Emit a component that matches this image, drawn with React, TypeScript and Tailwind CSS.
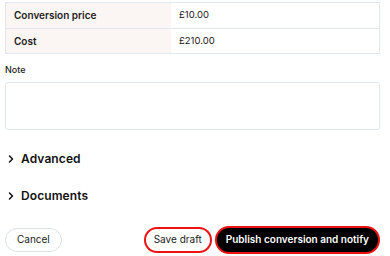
import { ChevronRight } from "lucide-react";

const rows = [
  { label: "Conversion price", value: "£10.00" },
  { label: "Cost", value: "£210.00" },
];

function Section({ title }: { title: string }) {
  return (
    <button className="flex items-center gap-[4px] h-[16px] text-[#111] cursor-pointer">
      <ChevronRight size={12} strokeWidth={3} />
      <span className="text-[12px] font-semibold tracking-[0.1px]">{title}</span>
    </button>
  );
}

export default function App() {
  return (
    <div
      className="w-[390px] h-[256px] overflow-hidden bg-white pl-[5px] pr-[10px] pt-[2px] text-[#1b1b1b]"
      style={{ fontFamily: "Inter, 'Noto Sans', sans-serif" }}
    >
      {/* Summary table */}
      <div className="border border-[#e1e7ee]">
        {rows.map((r, i) => (
          <div
            key={r.label}
            className={`grid grid-cols-[165px_1fr] h-[25px] ${i > 0 ? "border-t border-[#e1e7ee]" : ""}`}
          >
            <div className="bg-[#fbf6f4] flex items-center pl-[8px] text-[10px] font-semibold">{r.label}</div>
            <div className="flex items-center pl-[8px] text-[9.5px]">{r.value}</div>
          </div>
        ))}
      </div>

      {/* Note */}
      <div className="mt-[9px] text-[9px] font-medium text-[#222]">Note</div>
      <textarea className="mt-[5px] block w-full h-[48px] border border-[#e1e7ee] rounded-[3px] resize-none outline-none" />

      <div className="mt-[21px] flex flex-col gap-[21px]">
        <Section title="Advanced" />
        <Section title="Documents" />
      </div>

      {/* Actions */}
      <div className="mt-[22px] flex items-center">
        <button className="h-[24px] px-[11px] rounded-full border border-[#dbe2ea] text-[10px] text-[#222]">
          Cancel
        </button>
        <div className="ml-auto flex items-center gap-[3px]">
          <button className="h-[26px] px-[8px] rounded-full border-2 border-[#ee1111] bg-white text-[10px] text-[#222]">
            Save draft
          </button>
          <button className="h-[28px] px-[9px] rounded-full border-2 border-[#ee1111] bg-black text-[10px] font-semibold text-white">
            Publish conversion and notify
          </button>
        </div>
      </div>
    </div>
  );
}
